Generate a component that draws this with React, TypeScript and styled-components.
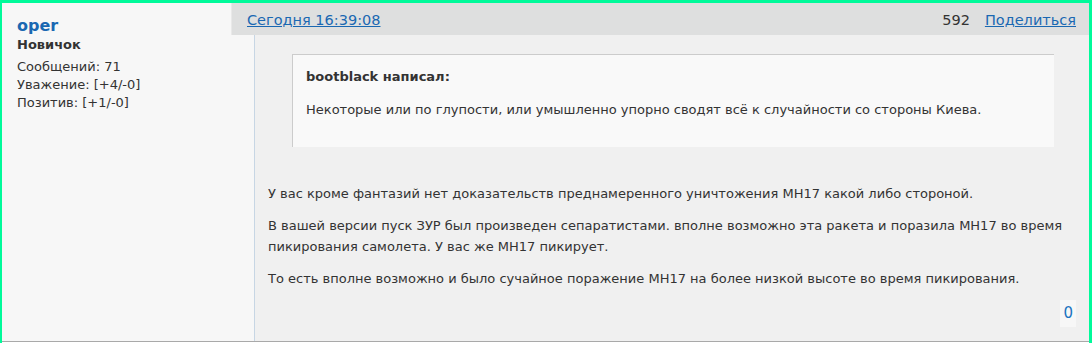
import React from 'react';
import styled, { createGlobalStyle } from 'styled-components';

const GlobalStyle = createGlobalStyle`
  html, body {
    margin: 0;
    padding: 0;
    background: #ffffff;
  }
  body {
    font-family: "DejaVu Sans", Verdana, sans-serif;
    font-size: 13px;
    color: #333;
  }
`;

const Frame = styled.div`
  width: 1092px;
  height: 343px;
  box-sizing: border-box;
  border-top: 3px solid #00fa9a;
  border-left: 2px solid #00fa9a;
  border-right: 3px solid #00fa9a;
  background: #fff;
`;

const Post = styled.div`
  height: 339px;
  box-sizing: border-box;
  border-bottom: 1px solid #a9a9a9;
  display: grid;
  grid-template-columns: 229px 23px 1fr;
  grid-template-rows: 32px 1fr;
`;

const Author = styled.div`
  grid-column: 1 / 3;
  grid-row: 1 / 3;
  background: #f7f7f7;
  padding: 13px 15px;
`;

const UserName = styled.a`
  display: block;
  font-size: 16px;
  font-weight: bold;
  color: #1a68b2;
  text-decoration: none;
  line-height: 20px;
`;

const UserTitle = styled.div`
  font-weight: bold;
  font-size: 13px;
  line-height: 18px;
  margin-bottom: 4px;
`;

const UserStat = styled.div`
  font-size: 13px;
  line-height: 18px;
`;

const Header = styled.div`
  grid-column: 2 / 4;
  grid-row: 1;
  z-index: 1;
  background: #dedfdf;
  border-left: 1px solid #e9e9e9;
  display: flex;
  align-items: center;
  padding: 1px 13px 0 15px;
  gap: 15px;
  font-size: 14.5px;
`;

const HeaderLink = styled.a`
  color: #1a68b2;
  text-decoration: underline;
`;

const ViewCount = styled.span`
  margin-left: auto;
  color: #333;
`;

const Body = styled.div`
  grid-column: 3;
  grid-row: 2;
  background: #f0f0f0;
  border-left: 1px solid #c7d6e4;
  padding: 19px 13px 0 13px;
  display: flex;
  flex-direction: column;
`;

const Quote = styled.blockquote`
  margin: 0 22px 0 24px;
  background: #f9f9f9;
  border-top: 1px solid #cccccc;
  border-left: 1px solid #cccccc;
  padding: 13px 14px 28px 13px;
`;

const QuoteAuthor = styled.div`
  font-weight: bold;
  line-height: 18px;
  margin-bottom: 15px;
`;

const QuoteText = styled.div`
  line-height: 18px;
`;

const Content = styled.div`
  margin-top: 36px;
`;

const Paragraph = styled.p`
  margin: 0 0 11px 0;
  line-height: 21px;
`;

const Footer = styled.div`
  margin-top: auto;
  display: flex;
  justify-content: flex-end;
  margin-bottom: 14px;
`;

const LikeCount = styled.a`
  background: #f7f7f7;
  color: #1a73c0;
  font-size: 15px;
  padding: 4px 3px;
  line-height: 19px;
  text-decoration: none;
`;

export default function App() {
  return (
    <>
      <GlobalStyle />
      <Frame>
        <Post>
          <Author>
            <UserName href="#">oper</UserName>
            <UserTitle>Новичок</UserTitle>
            <UserStat>Сообщений: 71</UserStat>
            <UserStat>Уважение: [+4/-0]</UserStat>
            <UserStat>Позитив: [+1/-0]</UserStat>
          </Author>
          <Header>
            <HeaderLink href="#">Сегодня 16:39:08</HeaderLink>
            <ViewCount>592</ViewCount>
            <HeaderLink href="#">Поделиться</HeaderLink>
          </Header>
          <Body>
            <Quote>
              <QuoteAuthor>bootblack написал:</QuoteAuthor>
              <QuoteText>
                Некоторые или по глупости, или умышленно упорно сводят всё к случайности со стороны Киева.
              </QuoteText>
            </Quote>
            <Content>
              <Paragraph>
                У вас кроме фантазий нет доказательств преднамеренного уничтожения MH17 какой либо стороной.
              </Paragraph>
              <Paragraph>
                В вашей версии пуск ЗУР был произведен сепаратистами. вполне возможно эта ракета и поразила MH17 во время
                пикирования самолета. У вас же MH17 пикирует.
              </Paragraph>
              <Paragraph>
                То есть вполне возможно и было сучайное поражение MH17 на более низкой высоте во время пикирования.
              </Paragraph>
            </Content>
            <Footer>
              <LikeCount href="#">0</LikeCount>
            </Footer>
          </Body>
        </Post>
      </Frame>
    </>
  );
}
